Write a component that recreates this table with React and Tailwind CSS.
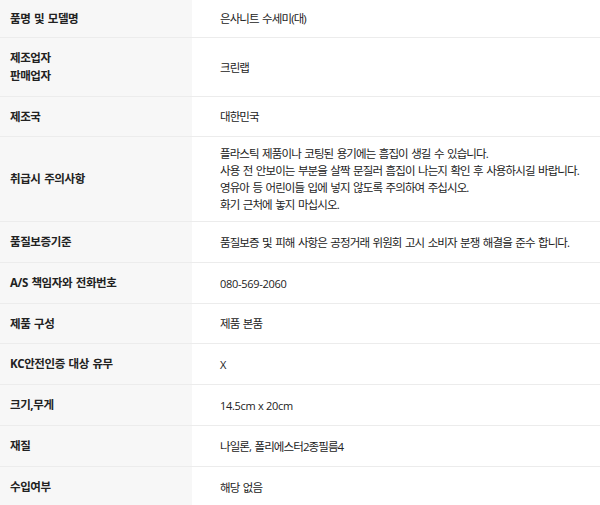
const rows = [
  { label: ['품명 및 모델명'], value: ['은사니트 수세미(대)'], h: 'h-[38px]' },
  { label: ['제조업자', '판매업자'], value: ['크린랩'], h: 'h-[59px]' },
  { label: ['제조국'], value: ['대한민국'], h: 'h-[40px]' },
  {
    label: ['취급시 주의사항'],
    value: [
      '플라스틱 제품이나 코팅된 용기에는 흠집이 생길 수 있습니다.',
      '사용 전 안보이는 부분을 살짝 문질러 흠집이 나는지 확인 후 사용하시길 바랍니다.',
      '영유아 등 어린이들 입에 넣지 않도록 주의하여 주십시오.',
      '화기 근처에 놓지 마십시오.',
    ],
    h: 'h-[85px]',
  },
  { label: ['품질보증기준'], value: ['품질보증 및 피해 사항은 공정거래 위원회 고시 소비자 분쟁 해결을 준수 합니다.'], h: 'h-[41px]' },
  { label: ['A/S 책임자와 전화번호'], value: ['080-569-2060'], latin: true, h: 'h-[41px]' },
  { label: ['제품 구성'], value: ['제품 본품'], h: 'h-[40px]' },
  { label: ['KC안전인증 대상 유무'], value: ['X'], latin: true, h: 'h-[41px]' },
  { label: ['크기,무게'], value: ['14.5cm x 20cm'], latin: true, h: 'h-[41px]' },
  { label: ['재질'], value: ['나일론, 폴리에스터2종필름4'], h: 'h-[41px]' },
  { label: ['수입여부'], value: ['해당 없음'], h: 'h-[41px]' },
];

export default function App() {
  return (
    <div className="w-[600px] h-[505px] overflow-hidden bg-white font-['Open_Sans','Noto_Sans_CJK_KR',sans-serif]">
      {rows.map((row, i) => (
        <div key={i} className={`grid grid-cols-[192px_1fr] border-b border-[#ececec] ${row.h}`}>
          <div className="bg-[#f7f7f7] flex flex-col justify-center pl-[10px] text-[11.5px] leading-[18px] font-bold text-[#222] tracking-[-0.4px] [word-spacing:1px]">
            {row.label.map((t) => (
              <div key={t}>{t}</div>
            ))}
          </div>
          <div
            className={`flex flex-col justify-center pl-[28px] leading-[17px] text-[#222] ${
              row.latin ? 'text-[11px] tracking-[-0.3px]' : 'text-[11.5px] tracking-[-0.9px] [word-spacing:1.3px]'
            }`}
          >
            {row.value.map((t) => (
              <div key={t} className="whitespace-nowrap">{t}</div>
            ))}
          </div>
        </div>
      ))}
    </div>
  );
}
